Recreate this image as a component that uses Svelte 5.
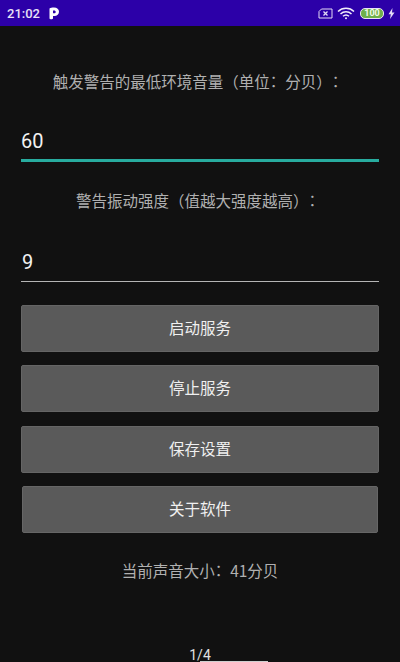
<script>
  const buttons = [
    { label: '启动服务', last: false },
    { label: '停止服务', last: false },
    { label: '保存设置', last: false },
    { label: '关于软件', last: true }
  ];
</script>

<div class="screen">
  <header class="status">
    <div class="status-left">
      <span class="time">21:02</span>
      <svg class="p" width="12" height="13" viewBox="0 0 12 13"><path fill="#fff" fill-rule="evenodd" d="M1.500 1.500C2.500.500 4 .5 6 .5c3 0 5 1.800 5 4.300S9 9 6.500 9H5v2.500c0 1-3.500 1-3.500 0zM5 3.500v2.700h1.200c.9 0 1.500-.5 1.500-1.300S7.100 3.500 6.200 3.500z"/></svg>
    </div>
    <div class="status-right">
      <svg width="15" height="11" viewBox="0 0 15 11" fill="none" stroke="#e4dcf5" stroke-width="1"><path d="M3.500 1H14v9H1V3.500z"/><path d="M5.500 3.500l4 4m0-4l-4 4" stroke-width="1.300"/></svg>
      <svg width="18" height="13" viewBox="0 0 18 13" fill="none" stroke="#f2eefa" stroke-width="1.500"><path d="M1 4.500a11.500 11.500 0 0 1 16 0"/><path d="M3.500 7a8 8 0 0 1 11 0"/><path d="M6 9.300a4.500 4.500 0 0 1 6 0"/><circle cx="9" cy="11.300" r="1" fill="#f2eefa" stroke="none"/></svg>
      <div class="battery"><span>100</span></div>
      <svg width="7" height="11" viewBox="0 0 7 11"><path fill="#e4dcf5" d="M4.500 0L.5 6.200h2.300L2 11l4.500-6.500H4z"/></svg>
    </div>
  </header>

  <main class="content">
    <p class="label first">触发警告的最低环境音量（单位<span class="colon">：</span>分贝）<span class="colon">：</span></p>
    <div class="field focused">60</div>
    <p class="label second">警告振动强度（值越大强度越高）<span class="colon">：</span></p>
    <div class="field plain">9</div>

    <div class="buttons">
      {#each buttons as b}
        <button class:last={b.last}>{b.label}</button>
      {/each}
    </div>

    <p class="label current">当前声音大小<span class="colon">：</span>41分贝</p>
  </main>

  <footer class="pager">
    <span>1/4</span>
    <div class="home"></div>
  </footer>
</div>

<style>
  :global(body) {
    margin: 0;
    background: #111111;
  }

  .screen {
    width: 400px;
    height: 662px;
    background: #111111;
    display: flex;
    flex-direction: column;
    overflow: hidden;
    font-family: "Noto Sans CJK SC", "Roboto", sans-serif;
  }

  .status {
    height: 26px;
    flex: none;
    background: #2c00a8;
    display: flex;
    align-items: center;
    justify-content: space-between;
    padding: 0 5px 0 7px;
    box-sizing: border-box;
  }

  .status-left, .status-right {
    display: flex;
    align-items: center;
  }

  .status-left { gap: 8px; }
  .status-right { gap: 4px; }

  .time {
    font-family: Roboto, sans-serif;
    font-size: 13px;
    font-weight: 500;
    color: #e8e2f6;
  }

  .battery {
    width: 24px;
    height: 11px;
    box-sizing: border-box;
    border: 1px solid #e8e2f6;
    border-radius: 5px;
    background: #6fb04a;
    display: flex;
    align-items: center;
    justify-content: center;
    margin-left: 1px;
  }

  .battery span {
    font-family: Roboto, sans-serif;
    font-size: 9px;
    font-weight: 700;
    line-height: 9px;
    color: #f4fbe9;
  }

  .content {
    flex: 1;
    display: flex;
    flex-direction: column;
    padding: 0 21px;
  }

  .label {
    margin: 0;
    text-align: center;
    font-size: 15.500px;
    line-height: 24px;
    color: #b0b0b0;
    text-spacing-trim: space-all;
    font-kerning: none;
    font-feature-settings: "palt" 0, "halt" 0, "chws" 0;
  }

  .colon {
    line-height: 0;
    vertical-align: 1.500px;
  }

  .first { margin-top: 43px; height: 24px; }
  .second { margin-top: 26px; height: 24px; }

  .field {
    font-family: Roboto, sans-serif;
    font-size: 20px;
    line-height: 26px;
    color: #f2f2f2;
    box-sizing: border-box;
  }

  .focused {
    margin-top: 35px;
    padding-bottom: 5px;
    border-bottom: 3px solid #28ac9f;
  }

  .plain {
    margin-top: 37px;
    padding: 0 0 6px 1px;
    border-bottom: 1px solid #b5b5b5;
  }

  .buttons {
    display: flex;
    flex-direction: column;
    gap: 13.330px;
    margin-top: 23px;
  }

  button {
    height: 47px;
    width: 100%;
    border: 1px solid #656565;
    border-radius: 2px;
    background: #5a5a5a;
    color: #f0f0f0;
    font-family: inherit;
    font-size: 15.500px;
    padding: 0 0 3px;
  }

  button.last {
    margin-left: 1px;
    width: 356px;
    border-color: #666;
  }

  .current {
    margin-top: 25px;
    height: 24px;
  }

  .pager {
    position: relative;
    height: 15px;
    flex: none;
    display: flex;
    justify-content: center;
  }

  .pager span {
    font-family: Roboto, sans-serif;
    font-size: 14px;
    line-height: 17px;
    color: #e0e0e0;
  }

  .home {
    position: absolute;
    left: 200px;
    bottom: 0;
    width: 68px;
    height: 1px;
    background: #cfcfcf;
  }
</style>
